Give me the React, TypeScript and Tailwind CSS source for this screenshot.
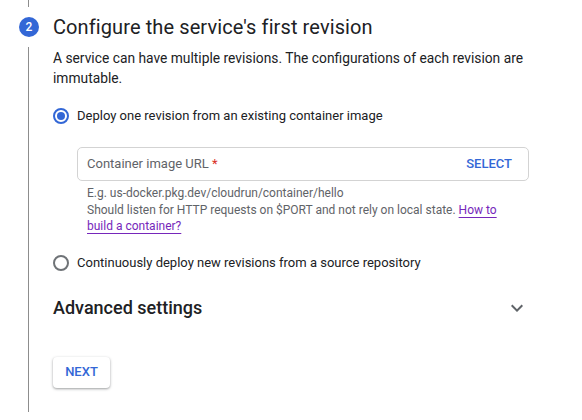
import React from 'react';

const ChevronDown: React.FC = () => (
  <svg width="24" height="24" viewBox="0 0 24 24" fill="#5f6368">
    <path d="M7.41 8.59 12 13.17l4.59-4.58L18 10l-6 6-6-6 1.41-1.41z" />
  </svg>
);

const Radio: React.FC<{ checked?: boolean }> = ({ checked }) =>
  checked ? (
    <div className="w-4 h-4 rounded-full border-2 border-[#3367d6] flex items-center justify-center shrink-0">
      <div className="w-2 h-2 rounded-full bg-[#3367d6]" />
    </div>
  ) : (
    <div className="w-4 h-4 rounded-full border-2 border-[#6f7377] shrink-0" />
  );

const App: React.FC = () => {
  return (
    <div className="w-[582px] h-[420px] bg-white overflow-hidden font-['Roboto',sans-serif] text-[#202124]">
      {/* connector from previous step */}
      <div className="ml-[28px] w-px h-[7px] bg-[#8d8d8d]" />

      {/* step header */}
      <div className="flex items-center mt-[10px] h-5">
        <div className="ml-[19px] w-5 h-5 rounded-full bg-[#3367d6] text-white text-[12px] font-medium flex items-center justify-center">
          2
        </div>
        <h2 className="ml-[14px] text-[20px] leading-7 font-normal tracking-[0.1px] whitespace-nowrap">
          Configure the service's first revision
        </h2>
      </div>

      {/* step body */}
      <div className="flex mt-[10px]">
        <div className="ml-[28px] w-px h-[365px] bg-[#8d8d8d] shrink-0" />
        <div className="ml-[24px] w-[476px] pt-px">
          <p className="text-[13.8px] leading-5 text-[#202124]">
            A service can have multiple revisions. The configurations of each revision are immutable.
          </p>

          <label className="flex items-center h-5 mt-[18px] text-[13px]">
            <Radio checked />
            <span className="ml-2">Deploy one revision from an existing container image</span>
          </label>

          <div className="ml-6 mt-[21px]">
            <div className="h-[34px] border border-[#d3d3d3] rounded-[5px] flex items-center justify-between pl-[9px] pr-4">
              <span className="text-[13px] text-[#5f6368]">
                Container image URL <span className="text-[#d93025]">*</span>
              </span>
              <span className="text-[13px] font-medium text-[#3367d6]">SELECT</span>
            </div>
            <p className="mt-1 pl-[10px] pr-6 text-[12px] leading-[16.5px] text-[#5f6368]">
              E.g. us-docker.pkg.dev/cloudrun/container/hello
              <br />
              Should listen for HTTP requests on $PORT and not rely on local state.{' '}
              <a className="text-[#7627bb] underline underline-offset-[3px]">How to build a container?</a>
            </p>
          </div>

          <label className="flex items-center h-5 mt-[18px] text-[13px]">
            <Radio />
            <span className="ml-2">Continuously deploy new revisions from a source repository</span>
          </label>

          <div className="flex items-center justify-between h-6 mt-[23px]">
            <h3 className="text-[18px] font-medium">Advanced settings</h3>
            <ChevronDown />
          </div>

          <button className="mt-[37px] w-[57px] h-[31px] rounded-[4px] bg-white text-[13px] font-medium text-[#3367d6] shadow-[0_1px_3px_rgba(60,64,67,0.35),0_1px_2px_rgba(60,64,67,0.2)]">
            NEXT
          </button>
        </div>
      </div>
    </div>
  );
};

export default App;
